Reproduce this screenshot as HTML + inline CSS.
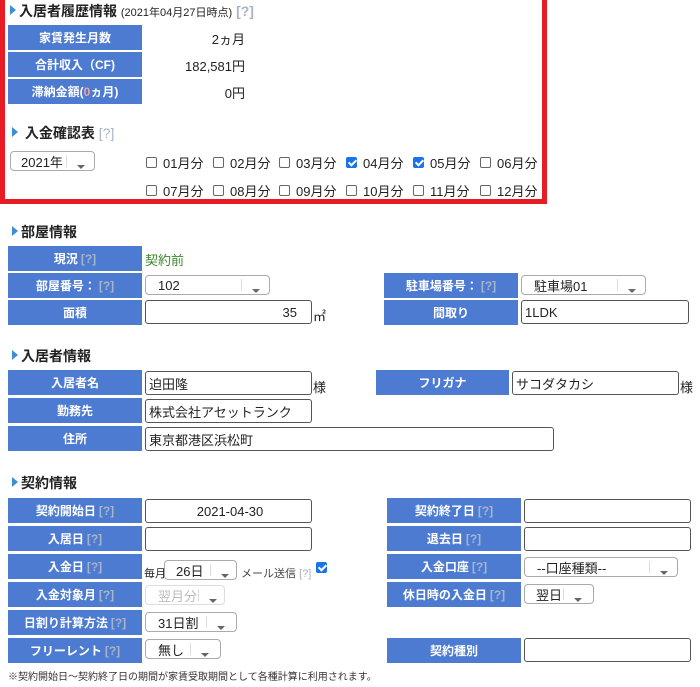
<!DOCTYPE html>
<html><head><meta charset="utf-8"><style>
*{box-sizing:border-box;margin:0;padding:0}
body{width:700px;height:687px;background:#fff;font-family:"Liberation Sans","Noto Sans CJK JP",sans-serif;font-size:13px;color:#222;position:relative;overflow:hidden}
.a{position:absolute}
.lb{position:absolute;background:#4d7bd2;color:#fff;font-weight:bold;font-size:12px;display:flex;align-items:center;justify-content:center;white-space:nowrap}
.q{color:#a8b4c8;font-weight:bold;margin-left:3px}
.h{position:absolute;font-weight:bold;font-size:14px;white-space:nowrap}
.h:before{content:"";display:inline-block;border-left:6px solid #3a8fd8;border-top:5px solid transparent;border-bottom:5px solid transparent;margin-right:3px;vertical-align:1px}
.in{position:absolute;border:1.5px solid #555;border-radius:3px;background:#fff;font-size:13px;padding-left:3px;display:flex;align-items:center;white-space:nowrap}
.sel{position:absolute;border:1px solid #aaa;border-radius:4px;background:#fff;font-size:13px;display:flex;align-items:center;white-space:nowrap}
.sel .ar{position:absolute;right:0;top:3px;bottom:3px;width:28px;border-left:1px solid #ddd}
.sel .ar:after{content:"";position:absolute;left:10px;top:10px;border-top:4px solid #666;border-left:4px solid transparent;border-right:4px solid transparent}
.cb{position:absolute;font-size:13px;white-space:nowrap;display:flex;align-items:center}
.cb i{display:inline-block;width:11px;height:11px;border:1px solid #666;border-radius:2px;margin-right:6px}
.cb i.on{background:#1a73e8;border-color:#1a73e8;position:relative}
.cb i.on:after{content:"";position:absolute;left:3px;top:0px;width:3px;height:6px;border:solid #fff;border-width:0 2px 2px 0;transform:rotate(45deg)}
</style></head><body>
<div class="a" style="left:0;top:0;width:547px;height:204px;border:5px solid #e81c24;border-top:none"></div>
<div class="h" style="left:10px;top:1px">入居者履歴情報 <span style="font-size:11px;font-weight:normal">(2021年04月27日時点)</span> <span style="color:#a8b4c8">[?]</span></div>
<div class="lb" style="left:8px;top:25px;width:134px;height:25px">家賃発生月数</div>
<div class="a" style="left:150px;top:29px;width:95px;text-align:right">2ヵ月</div>
<div class="lb" style="left:8px;top:52px;width:134px;height:25px">合計収入（CF)</div>
<div class="a" style="left:150px;top:56px;width:95px;text-align:right">182,581円</div>
<div class="lb" style="left:8px;top:79px;width:134px;height:25px">滞納金額(<span style="color:#f4a0a0">0</span>ヵ月)</div>
<div class="a" style="left:150px;top:83px;width:95px;text-align:right">0円</div>
<div class="h" style="left:12px;top:123px">&nbsp;入金確認表 <span style="color:#a8b4c8;font-weight:normal">[?]</span></div>
<div class="sel" style="left:10px;top:151px;width:85px;height:20px;padding-left:10px">2021年<span class="ar"></span></div>
<div class="cb" style="left:146px;top:153px"><i></i>01月分</div>
<div class="cb" style="left:213px;top:153px"><i></i>02月分</div>
<div class="cb" style="left:279px;top:153px"><i></i>03月分</div>
<div class="cb" style="left:346px;top:153px"><i class="on"></i>04月分</div>
<div class="cb" style="left:413px;top:153px"><i class="on"></i>05月分</div>
<div class="cb" style="left:480px;top:153px"><i></i>06月分</div>
<div class="cb" style="left:146px;top:181px"><i></i>07月分</div>
<div class="cb" style="left:213px;top:181px"><i></i>08月分</div>
<div class="cb" style="left:279px;top:181px"><i></i>09月分</div>
<div class="cb" style="left:346px;top:181px"><i></i>10月分</div>
<div class="cb" style="left:413px;top:181px"><i></i>11月分</div>
<div class="cb" style="left:480px;top:181px"><i></i>12月分</div>

<div class="h" style="left:12px;top:222px">部屋情報</div>
<div class="lb" style="left:8px;top:246px;width:134px;height:25px">現況<span class="q">[?]</span></div>
<div class="a" style="left:145px;top:250px;color:#3a8a2a">契約前</div>
<div class="lb" style="left:8px;top:273px;width:134px;height:25px">部屋番号：<span class="q">[?]</span></div>
<div class="sel" style="left:145px;top:275px;width:125px;height:20px;padding-left:12px">102<span class="ar"></span></div>
<div class="lb" style="left:8px;top:300px;width:134px;height:25px">面積</div>
<div class="in" style="left:145px;top:300px;width:167px;height:24px;justify-content:flex-end;padding-right:14px">35</div>
<div class="a" style="left:313px;top:306px">㎡</div>
<div class="lb" style="left:384px;top:273px;width:134px;height:25px">駐車場番号：<span class="q">[?]</span></div>
<div class="sel" style="left:521px;top:275px;width:125px;height:20px;padding-left:12px">駐車場01<span class="ar"></span></div>
<div class="lb" style="left:384px;top:300px;width:134px;height:25px">間取り</div>
<div class="in" style="left:521px;top:300px;width:168px;height:24px">1LDK</div>

<div class="h" style="left:12px;top:346px">入居者情報</div>
<div class="lb" style="left:8px;top:370px;width:134px;height:25px">入居者名</div>
<div class="in" style="left:145px;top:371px;width:167px;height:24px">迫田隆</div>
<div class="a" style="left:313px;top:377px">様</div>
<div class="lb" style="left:376px;top:370px;width:133px;height:25px">フリガナ</div>
<div class="in" style="left:512px;top:371px;width:167px;height:24px">サコダタカシ</div>
<div class="a" style="left:680px;top:377px">様</div>
<div class="lb" style="left:8px;top:398px;width:134px;height:25px">勤務先</div>
<div class="in" style="left:145px;top:399px;width:167px;height:24px">株式会社アセットランク</div>
<div class="lb" style="left:8px;top:426px;width:134px;height:25px">住所</div>
<div class="in" style="left:145px;top:427px;width:409px;height:24px">東京都港区浜松町</div>

<div class="h" style="left:12px;top:473px">契約情報</div>
<div class="lb" style="left:8px;top:498px;width:134px;height:25px">契約開始日<span class="q">[?]</span></div>
<div class="in" style="left:145px;top:499px;width:167px;height:24px;justify-content:center">2021-04-30</div>
<div class="lb" style="left:8px;top:526px;width:134px;height:25px">入居日<span class="q">[?]</span></div>
<div class="in" style="left:145px;top:527px;width:167px;height:24px"></div>
<div class="lb" style="left:8px;top:554px;width:134px;height:25px">入金日<span class="q">[?]</span></div>
<div class="a" style="left:144px;top:565px;font-size:11px">毎月</div>
<div class="sel" style="left:164px;top:560px;width:73px;height:20px;padding-left:11px">26日<span class="ar" style="width:26px"></span></div>
<div class="a" style="left:241px;top:565px;font-size:11px;color:#444">メール送信 <span style="color:#a8b4c8">[?]</span></div>
<div class="cb" style="left:316px;top:562px"><i class="on"></i></div>
<div class="lb" style="left:8px;top:582px;width:134px;height:25px">入金対象月<span class="q">[?]</span></div>
<div class="sel" style="left:145px;top:585px;width:80px;height:20px;padding-left:12px;color:#bbb;border-color:#ddd">翌月分<span class="ar" style="width:26px"></span></div>
<div class="lb" style="left:8px;top:610px;width:134px;height:25px">日割り計算方法<span class="q">[?]</span></div>
<div class="sel" style="left:145px;top:612px;width:92px;height:20px;padding-left:12px">31日割<span class="ar" style="width:30px"></span></div>
<div class="lb" style="left:8px;top:638px;width:134px;height:25px">フリーレント<span class="q">[?]</span></div>
<div class="sel" style="left:145px;top:639px;width:76px;height:20px;padding-left:12px">無し<span class="ar" style="width:30px"></span></div>
<div class="lb" style="left:387px;top:498px;width:134px;height:25px">契約終了日<span class="q">[?]</span></div>
<div class="in" style="left:524px;top:499px;width:167px;height:24px"></div>
<div class="lb" style="left:387px;top:526px;width:134px;height:25px">退去日<span class="q">[?]</span></div>
<div class="in" style="left:524px;top:527px;width:167px;height:24px"></div>
<div class="lb" style="left:387px;top:554px;width:134px;height:25px">入金口座<span class="q">[?]</span></div>
<div class="sel" style="left:524px;top:557px;width:154px;height:20px;padding-left:12px">--口座種類--<span class="ar"></span></div>
<div class="lb" style="left:387px;top:582px;width:134px;height:25px">休日時の入金日<span class="q">[?]</span></div>
<div class="sel" style="left:524px;top:584px;width:70px;height:20px;padding-left:11px">翌日<span class="ar" style="width:30px"></span></div>
<div class="lb" style="left:387px;top:638px;width:134px;height:25px">契約種別</div>
<div class="in" style="left:524px;top:638px;width:167px;height:24px"></div>
<div class="a" style="left:8px;top:668px;font-size:10px;color:#333;white-space:nowrap">※契約開始日～契約終了日の期間が家賃受取期間として各種計算に利用されます。</div>
</body></html>
